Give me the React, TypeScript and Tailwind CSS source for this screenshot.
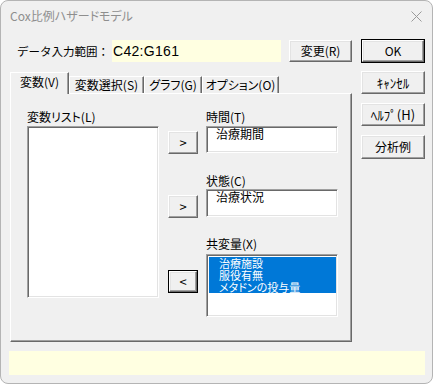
import type { ReactNode } from "react";

const RAISED =
  "border border-t-white border-l-white border-r-[#696969] border-b-[#696969] bg-[#f0f0f0] shadow-[inset_-1px_-1px_0_#a0a0a0,inset_1px_1px_0_#e3e3e3]";
const SUNKEN =
  "border border-t-[#a0a0a0] border-l-[#a0a0a0] border-r-white border-b-white bg-white shadow-[inset_1px_1px_0_#696969,inset_-1px_-1px_0_#e3e3e3]";

function Btn({
  children,
  className = "",
  primary = false,
}: {
  children: ReactNode;
  className?: string;
  primary?: boolean;
}) {
  if (primary) {
    return (
      <div className={`border border-black ${className}`}>
        <div className={`flex h-full w-full items-center justify-center ${RAISED}`}>{children}</div>
      </div>
    );
  }
  return <div className={`flex items-center justify-center ${RAISED} ${className}`}>{children}</div>;
}

const TABS = [
  { label: "変数(V)", w: "w-[59px]", active: true },
  { label: "変数選択(S)", w: "w-[75px]", active: false },
  { label: "グラフ(G)", w: "w-[58px]", active: false },
  { label: "オプション(O)", w: "w-[77px]", active: false },
];

const COVARIATES = ["治療施設", "服役有無", "メタドンの投与量"];

export default function App() {
  return (
    <div
      className="relative h-[384px] w-[433px] overflow-hidden rounded-[8px] border border-[#b4b4b4] bg-[#f0f0f0] text-[12px] text-black [font-feature-settings:'palt']"
      style={{ fontFamily: '"Noto Sans CJK JP", "Noto Sans", sans-serif' }}
    >
      {/* title bar */}
      <div className="flex h-[30px] items-center justify-between pl-[9px] pr-[10px]">
        <span className="text-[12px] leading-[14px] text-[#8e8e8e]">Cox比例ハザードモデル</span>
        <svg width="11" height="11" viewBox="0 0 11 11" className="mt-[1px]">
          <path d="M0.5 0.5 L10.5 10.5 M10.5 0.5 L0.5 10.5" stroke="#9a9a9a" strokeWidth="1" fill="none" />
        </svg>
      </div>

      <div className="flex pl-[9px]">
        {/* left column */}
        <div className="w-[342px]">
          <div className="mt-[8px] flex h-[24px] items-center">
            <span className="ml-[7px] w-[95px] text-[11.5px] leading-[16px] [font-feature-settings:normal]">
              データ入力範囲：
            </span>
            <div
              className="flex h-[22px] w-[169px] items-center bg-[#ffffe1] pl-[1px] text-[14px] tracking-[0.3px]"
              style={{ fontFamily: '"Liberation Sans", sans-serif' }}
            >
              C42:G161
            </div>
            <Btn className="ml-[8px] h-[22px] w-[63px]">変更(R)</Btn>
          </div>

          {/* tabs */}
          <div className="relative z-10 mt-[9px] flex h-[21px] items-end">
            {TABS.map((t) =>
              t.active ? (
                <div
                  key={t.label}
                  className={`${t.w} -mb-[1px] flex h-[22px] items-start justify-center border-l border-t border-r border-l-white border-t-white border-r-[#696969] bg-[#f0f0f0] pt-[2px] leading-[14px] shadow-[inset_-1px_0_0_#a0a0a0]`}
                >
                  {t.label}
                </div>
              ) : (
                <div
                  key={t.label}
                  className={`${t.w} flex h-[17px] items-center justify-center border-l border-t border-r border-l-white border-t-white border-r-[#696969] leading-[14px] shadow-[inset_-1px_0_0_#a0a0a0]`}
                >
                  {t.label}
                </div>
              ),
            )}
          </div>

          {/* tab panel */}
          <div className="flex h-[249px] border border-t-white border-l-white border-r-[#696969] border-b-[#696969] shadow-[inset_-1px_-1px_0_#a0a0a0]">
            <div className="ml-[16px] mt-[15px] w-[132px]">
              <div className="h-[16px] leading-[16px]">変数リスト(L)</div>
              <div className={`mt-[1px] h-[172px] ${SUNKEN}`} />
            </div>

            <div className="ml-[9px] mt-[15px] w-[30px] text-[13px]">
              <Btn className="mt-[22px] h-[23px]">&gt;</Btn>
              <Btn className="mt-[41px] h-[23px]">&gt;</Btn>
              <Btn primary className="mt-[52px] h-[23px]">&lt;</Btn>
            </div>

            <div className="ml-[8px] mt-[15px] w-[132px]">
              <div className="h-[16px] leading-[16px]">時間(T)</div>
              <div className={`mt-[1px] h-[27px] pl-[9px] pt-[1px] leading-[12px] ${SUNKEN}`}>治療期間</div>
              <div className="mt-[20px] h-[16px] leading-[16px]">状態(C)</div>
              <div className={`h-[28px] pl-[9px] pt-[1px] leading-[12px] ${SUNKEN}`}>治療状況</div>
              <div className="mt-[19px] h-[16px] leading-[16px]">共変量(X)</div>
              <div className={`mt-[2px] h-[63px] p-[2px] pr-[1px] ${SUNKEN}`}>
                {COVARIATES.map((c) => (
                  <div
                    key={c}
                    className="h-[12px] bg-[#0078d7] pl-[10px] text-[11px] leading-[12px] text-white"
                  >
                    {c}
                  </div>
                ))}
              </div>
            </div>
          </div>
        </div>

        {/* right column */}
        <div className="ml-[9px] flex w-[64px] flex-col pt-[8px]">
          <Btn primary className="h-[24px]">OK</Btn>
          <Btn className="mt-[8px] h-[23px] text-[13px]">ｷｬﾝｾﾙ</Btn>
          <Btn className="mt-[9px] h-[23px] text-[13px]">ﾍﾙﾌﾟ(H)</Btn>
          <Btn className="mt-[9px] h-[24px]">分析例</Btn>
        </div>
      </div>

      {/* status bar */}
      <div className="ml-[8px] mt-[9px] h-[24px] w-[416px] bg-[#ffffe1]" />
    </div>
  );
}
